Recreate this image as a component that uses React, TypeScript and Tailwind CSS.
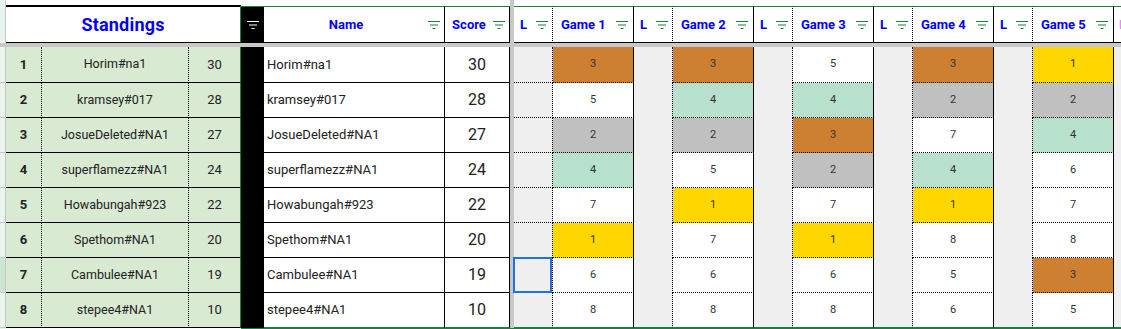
import React from 'react';

interface Player {
  name: string;
  score: number;
  games: number[];
}

const players: Player[] = [
  { name: 'Horim#na1', score: 30, games: [3, 3, 5, 3, 1] },
  { name: 'kramsey#017', score: 28, games: [5, 4, 4, 2, 2] },
  { name: 'JosueDeleted#NA1', score: 27, games: [2, 2, 3, 7, 4] },
  { name: 'superflamezz#NA1', score: 24, games: [4, 5, 2, 4, 6] },
  { name: 'Howabungah#923', score: 22, games: [7, 1, 7, 1, 7] },
  { name: 'Spethom#NA1', score: 20, games: [1, 7, 1, 8, 8] },
  { name: 'Cambulee#NA1', score: 19, games: [6, 6, 6, 5, 3] },
  { name: 'stepee4#NA1', score: 10, games: [8, 8, 8, 6, 5] },
];

function placeBg(v: number) {
  if (v === 1) return 'bg-[#ffd700]';
  if (v === 2) return 'bg-[#c0c0c0]';
  if (v === 3) return 'bg-[#cd7f32]';
  if (v === 4) return 'bg-[#b7e1cd]';
  return 'bg-white';
}

function FilterIcon({ color = '#188038' }: { color?: string }) {
  return (
    <svg width="12" height="8" viewBox="0 0 12 8" className="shrink-0">
      <rect x="0" y="0" width="12" height="1" fill={color} />
      <rect x="2" y="3.5" width="8" height="1" fill={color} />
      <rect x="4.5" y="7" width="3" height="1" fill={color} />
    </svg>
  );
}

const HEAD = 'mt-px shrink-0 border-t border-t-[#188038] border-b border-b-black flex items-center bg-white';

function HeaderRow() {
  return (
    <div className="flex h-[38px]">
      <div className="w-[6px] shrink-0 bg-[#e8f4ec] border-r border-[#c4c7c5]" />
      <div className="w-[235px] shrink-0 bg-white border-t-2 border-b border-black border-r border-r-[#188038] flex items-center justify-center">
        <span className="text-[18px] font-bold text-[#0000ff] tracking-[0.2px]">Standings</span>
      </div>
      <div className={`${HEAD} w-[23px] !bg-black justify-center`}>
        <FilterIcon color="#ffffff" />
      </div>
      <div className={`${HEAD} w-[181px] border-r border-r-black`}>
        <span className="flex-1 text-center text-[13px] font-bold text-[#0000ff]">Name</span>
        <span className="mr-[4px]">
          <FilterIcon />
        </span>
      </div>
      <div className={`${HEAD} w-[65px] border-r border-r-black`}>
        <span className="flex-1 text-center text-[13px] font-bold text-[#0000ff]">Score</span>
        <span className="mr-[4px]">
          <FilterIcon />
        </span>
      </div>
      <div className="w-[4px] shrink-0 bg-[#c8c8c8]" />
      {[1, 2, 3, 4, 5].map((g) => (
        <React.Fragment key={g}>
          <div className={`${HEAD} w-[39px] border-r border-r-black [border-right-style:dotted]`}>
            <span className="pl-[6px] text-[13px] font-bold text-[#0000ff]">L</span>
            <span className="ml-auto mr-[4px]">
              <FilterIcon />
            </span>
          </div>
          <div className={`${HEAD} w-[81px] border-r border-r-black`}>
            <span className="pl-[8px] text-[13px] font-bold text-[#0000ff] whitespace-nowrap">Game {g}</span>
            <span className="ml-auto mr-[5px]">
              <FilterIcon />
            </span>
          </div>
        </React.Fragment>
      ))}
      <div className={`${HEAD} flex-1 overflow-hidden`}>
        <span className="pl-[5px] text-[13px] font-bold text-[#e08cf5]">L</span>
      </div>
    </div>
  );
}

function DataRow({ p, i }: { p: Player; i: number }) {
  const last = i === players.length - 1;
  const h = i === 0 ? 'h-[36px]' : 'h-[35px]';
  const gameBorder = last
    ? 'border-b border-b-[#188038]'
    : 'border-b border-b-black [border-bottom-style:dotted]';
  const rightBottom = last ? 'border-b border-b-[#188038]' : 'border-b border-b-black';
  return (
    <div className={`flex ${h}`}>
      <div
        className={`w-[6px] shrink-0 border-r border-b border-[#c4c7c5] ${
          i === 6 ? 'bg-[#cde6d4]' : 'bg-[#e8f4ec]'
        }`}
      />
      <div className="w-[36px] shrink-0 bg-[#d9ead3] border-b border-r border-black [border-right-style:dotted] flex items-center justify-center text-[13px] font-bold text-[#222]">
        {i + 1}
      </div>
      <div className="w-[147px] shrink-0 bg-[#d9ead3] border-b border-r border-black [border-right-style:dotted] flex items-center justify-center text-[12.5px] text-[#222]">
        {p.name}
      </div>
      <div className="w-[52px] shrink-0 bg-[#d9ead3] border-b border-b-black border-r border-r-[#188038] flex items-center justify-center text-[13px] text-[#222]">
        {p.score}
      </div>
      <div className="w-[23px] shrink-0 bg-black" />
      <div className={`w-[181px] shrink-0 bg-white ${rightBottom} border-r border-r-black flex items-center pl-[3px] text-[13px] text-[#222]`}>
        {p.name}
      </div>
      <div className={`w-[65px] shrink-0 bg-white ${rightBottom} border-r border-r-black flex items-center justify-center text-[16px] text-[#222]`}>
        {p.score}
      </div>
      <div className="w-[4px] shrink-0 bg-[#c8c8c8]" />
      {p.games.map((v, g) => (
        <React.Fragment key={g}>
          <div
            className={`relative w-[39px] shrink-0 bg-[#efefef] border-r border-r-black [border-right-style:dotted] ${
              g === 0 ? gameBorder : last ? 'border-b border-b-[#188038]' : ''
            }`}
          >
            {g === 0 && i === 6 && (
              <div className="absolute -left-px -top-px w-[39px] h-[36px] border-2 border-[#1a73e8]" />
            )}
          </div>
          <div
            className={`w-[81px] shrink-0 ${placeBg(v)} ${gameBorder} border-r border-r-black flex items-center justify-center text-[11px] text-[#333]`}
          >
            {v}
          </div>
        </React.Fragment>
      ))}
      <div className={`flex-1 bg-[#efefef] ${last ? 'border-b border-b-[#188038]' : ''}`} />
    </div>
  );
}

export default function App() {
  return (
    <div className="w-[1121px] h-[329px] overflow-hidden bg-white font-[Roboto,'Liberation_Sans',sans-serif] select-none">
      <div className="flex h-[5px]">
        <div className="w-[6px] shrink-0 bg-[#e8f4ec] border-r border-[#c4c7c5]" />
        <div className="w-[504px] shrink-0 bg-white" />
        <div className="w-[4px] shrink-0 bg-[#c8c8c8]" />
        <div className="flex-1 bg-white" />
      </div>
      <HeaderRow />
      <div className="h-[4px] bg-[#c8c8c8]" />
      {players.map((p, i) => (
        <DataRow key={p.name} p={p} i={i} />
      ))}
      <div className="flex h-px">
        <div className="w-[6px] shrink-0 bg-[#e8f4ec]" />
        <div className="w-[235px] shrink-0 bg-white" />
        <div className="flex-1 bg-[#188038]" />
      </div>
    </div>
  );
}
